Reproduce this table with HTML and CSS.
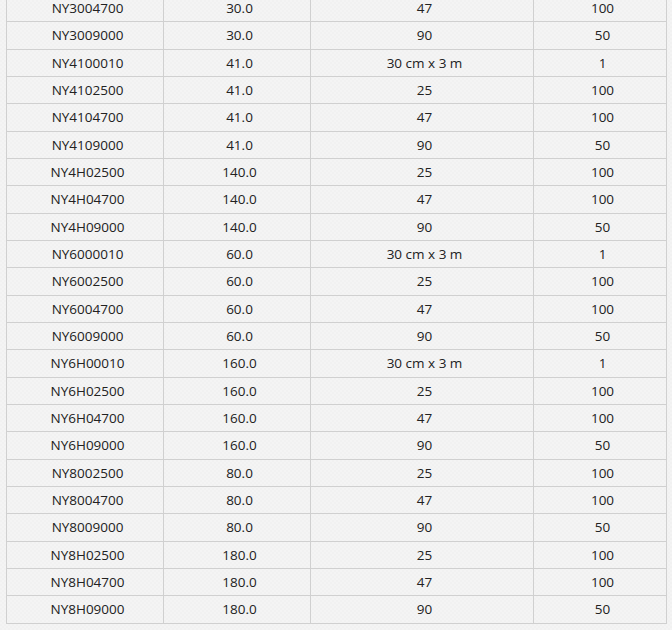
FILE: index.html
```html
<!DOCTYPE html>
<html>
<head>
<meta charset="utf-8">
<link rel="stylesheet" href="styles.css">
</head>
<body>
<div class="page">
<table class="spec">
<tbody>
<tr><td>NY3004700</td><td>30.0</td><td>47</td><td>100</td></tr>
<tr><td>NY3009000</td><td>30.0</td><td>90</td><td>50</td></tr>
<tr><td>NY4100010</td><td>41.0</td><td>30 cm x 3 m</td><td>1</td></tr>
<tr><td>NY4102500</td><td>41.0</td><td>25</td><td>100</td></tr>
<tr><td>NY4104700</td><td>41.0</td><td>47</td><td>100</td></tr>
<tr><td>NY4109000</td><td>41.0</td><td>90</td><td>50</td></tr>
<tr><td>NY4H02500</td><td>140.0</td><td>25</td><td>100</td></tr>
<tr><td>NY4H04700</td><td>140.0</td><td>47</td><td>100</td></tr>
<tr><td>NY4H09000</td><td>140.0</td><td>90</td><td>50</td></tr>
<tr><td>NY6000010</td><td>60.0</td><td>30 cm x 3 m</td><td>1</td></tr>
<tr><td>NY6002500</td><td>60.0</td><td>25</td><td>100</td></tr>
<tr><td>NY6004700</td><td>60.0</td><td>47</td><td>100</td></tr>
<tr><td>NY6009000</td><td>60.0</td><td>90</td><td>50</td></tr>
<tr><td>NY6H00010</td><td>160.0</td><td>30 cm x 3 m</td><td>1</td></tr>
<tr><td>NY6H02500</td><td>160.0</td><td>25</td><td>100</td></tr>
<tr><td>NY6H04700</td><td>160.0</td><td>47</td><td>100</td></tr>
<tr><td>NY6H09000</td><td>160.0</td><td>90</td><td>50</td></tr>
<tr><td>NY8002500</td><td>80.0</td><td>25</td><td>100</td></tr>
<tr><td>NY8004700</td><td>80.0</td><td>47</td><td>100</td></tr>
<tr><td>NY8009000</td><td>80.0</td><td>90</td><td>50</td></tr>
<tr><td>NY8H02500</td><td>180.0</td><td>25</td><td>100</td></tr>
<tr><td>NY8H04700</td><td>180.0</td><td>47</td><td>100</td></tr>
<tr><td>NY8H09000</td><td>180.0</td><td>90</td><td>50</td></tr>
</tbody>
</table>
</div>
</body>
</html>
```
FILE: styles.css
```css
html, body {
  margin: 0;
  padding: 0;
  background: #f3f3f3;
  background-image: repeating-conic-gradient(#f4f4f4 0 25%, #f1f1f1 0 50%);
  background-size: 4px 4px;
}
.page {
  padding: 0 0 0 6px;
  margin-top: -6px;
  height: 636px;
  overflow: hidden;
}
.spec {
  border-collapse: collapse;
  table-layout: fixed;
  width: 660px;
  font-family: "Open Sans", "Noto Sans", sans-serif;
  font-size: 13.5px;
  color: #222;
}
.spec td {
  border: 1px solid #d0d0d0;
  height: 27.34px;
  padding: 0 0 0 5px;
  text-align: center;
  vertical-align: middle;
  box-sizing: border-box;
}
.spec td:nth-child(1) { width: 157px; }
.spec td:nth-child(2) { width: 147px; }
.spec td:nth-child(3) { width: 223px; }
.spec td:nth-child(4) { width: 133px; }
```
